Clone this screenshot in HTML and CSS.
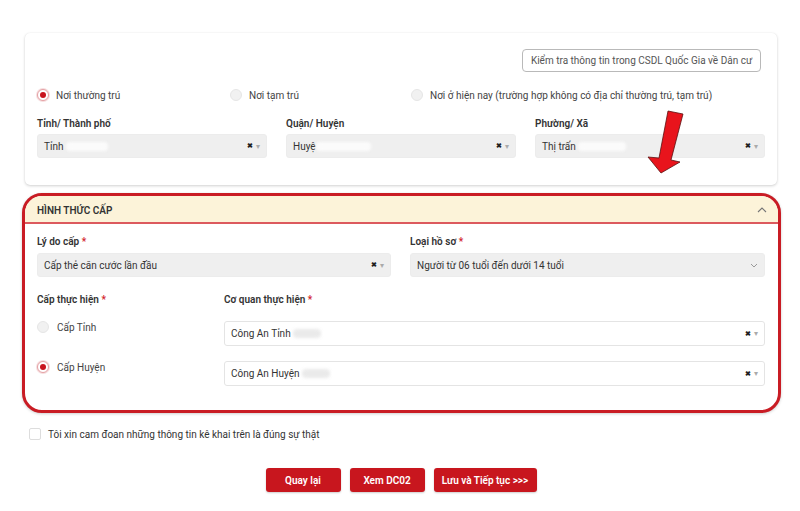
FILE: index.html
```html
<!DOCTYPE html>
<html lang="vi">
<head>
<meta charset="utf-8">
<title>Hình thức cấp</title>
<link rel="stylesheet" href="styles.css">
</head>
<body>
<div class="page">
  <section class="card card-address">
    <div class="check-row">
      <button class="btn-outline">Kiểm tra thông tin trong CSDL Quốc Gia về Dân cư</button>
    </div>
    <div class="radio-row">
      <label class="radio-item w-1"><span class="radio checked"></span>Nơi thường trú</label>
      <label class="radio-item w-2"><span class="radio"></span>Nơi tạm trú</label>
      <label class="radio-item"><span class="radio"></span>Nơi ở hiện nay (trường hợp không có địa chỉ thường trú, tạm trú)</label>
    </div>
    <div class="grid-3">
      <div class="field">
        <div class="label">Tỉnh/ Thành phố</div>
        <div class="select gray"><span class="val">Tỉnh <span class="blur b1"></span></span><span class="ctl"><span class="x">✖</span><span class="caret">▾</span></span></div>
      </div>
      <div class="field">
        <div class="label">Quận/ Huyện</div>
        <div class="select gray"><span class="val">Huyệ<span class="blur b2"></span></span><span class="ctl"><span class="x">✖</span><span class="caret">▾</span></span></div>
      </div>
      <div class="field">
        <div class="label">Phường/ Xã</div>
        <div class="select gray"><span class="val">Thị trấn <span class="blur b3"></span></span><span class="ctl"><span class="x">✖</span><span class="caret">▾</span></span></div>
      </div>
    </div>
    <svg class="arrow" width="40" height="66" viewBox="646 109 40 66">
      <polygon points="668,111 683,114 671,160 680,162 661,173 648,157 659,158" fill="#e8141c" stroke="#5a1010" stroke-width="0.8" stroke-linejoin="round"/>
    </svg>
  </section>

  <section class="card card-issue">
    <div class="issue-head">
      <span class="title">HÌNH THỨC CẤP</span>
      <svg width="10" height="6" viewBox="0 0 10 6"><polyline points="1,5 5,1 9,5" fill="none" stroke="#777" stroke-width="1.1"/></svg>
    </div>
    <div class="issue-body">
      <div class="grid-2">
        <div class="field">
          <div class="label">Lý do cấp <span class="req">*</span></div>
          <div class="select gray"><span class="val">Cấp thẻ căn cước lần đầu</span><span class="ctl"><span class="x">✖</span><span class="caret">▾</span></span></div>
        </div>
        <div class="field">
          <div class="label">Loại hồ sơ <span class="req">*</span></div>
          <div class="select gray"><span class="val">Người từ 06 tuổi đến dưới 14 tuổi</span><span class="ctl"><svg width="8" height="5" viewBox="0 0 8 5"><polyline points="1,1 4,4 7,1" fill="none" stroke="#999" stroke-width="1"/></svg></span></div>
        </div>
      </div>
      <div class="grid-level">
        <div class="level-col">
          <div class="label">Cấp thực hiện <span class="req">*</span></div>
          <label class="radio-item lvl lvl-1"><span class="radio"></span>Cấp Tỉnh</label>
          <label class="radio-item lvl lvl-2"><span class="radio checked"></span>Cấp Huyện</label>
        </div>
        <div class="agency-col">
          <div class="label">Cơ quan thực hiện <span class="req">*</span></div>
          <div class="select white s-1"><span class="val">Công An Tỉnh <span class="blur b4"></span></span><span class="ctl"><span class="x">✖</span><span class="caret">▾</span></span></div>
          <div class="select white s-2"><span class="val">Công An Huyện <span class="blur b5"></span></span><span class="ctl"><span class="x">✖</span><span class="caret">▾</span></span></div>
        </div>
      </div>
    </div>
  </section>

  <label class="agree"><span class="checkbox"></span>Tôi xin cam đoan những thông tin kê khai trên là đúng sự thật</label>

  <div class="actions">
    <button class="btn-red b-back">Quay lại</button>
    <button class="btn-red b-view">Xem DC02</button>
    <button class="btn-red b-save">Lưu và Tiếp tục &gt;&gt;&gt;</button>
  </div>
</div>
</body>
</html>
```

FILE: styles.css
```css
* { box-sizing: border-box; }
html, body { margin: 0; padding: 0; background: #fff; }
body {
  font-family: Roboto, "Liberation Sans", Arial, sans-serif;
  font-size: 10px;
  color: #333;
  width: 800px;
  height: 511px;
  overflow: hidden;
}
.page {
  padding: 33px 23px 0 25px;
}
.card {
  position: relative;
  background: #fff;
  border-radius: 5px;
  box-shadow: 0 1px 3px rgba(0,0,0,0.18), 0 0 1px rgba(0,0,0,0.08);
}
.card-address {
  height: 152px;
  padding: 16px 12px 0 12px;
}
.check-row {
  display: flex;
  justify-content: flex-end;
  padding-right: 4px;
}
.btn-outline {
  height: 23px;
  width: 239px;
  border: 1px solid #b9b9b9;
  border-radius: 4px;
  background: #fff;
  color: #555;
  font-family: inherit;
  font-size: 10px;
  padding: 0;
}
.radio-row {
  display: flex;
  align-items: center;
  margin-top: 17px;
  height: 12px;
}
.radio-item {
  display: flex;
  align-items: center;
  gap: 7px;
  color: #444;
  white-space: nowrap;
}
.radio-row .w-1 { width: 193px; }
.radio-row .w-2 { width: 186px; }
.radio-row .radio-item:last-child { margin-left: -5px; }
.radio {
  width: 12px;
  height: 12px;
  border-radius: 50%;
  background: #f1f1f1;
  border: 1px solid #e6e6e6;
  flex: none;
  position: relative;
}
.radio.checked {
  background: #fff;
  border: 1px solid #e4a0a4;
  box-shadow: 0 0 0 1px rgba(220,120,125,0.25);
}
.radio.checked::after {
  content: "";
  position: absolute;
  left: 2px;
  top: 2px;
  width: 6px;
  height: 6px;
  border-radius: 50%;
  background: #c8141e;
}
.grid-3 {
  display: grid;
  grid-template-columns: 230px 230px 230px;
  column-gap: 19px;
  margin-top: 17px;
}
.label {
  font-weight: 600;
  color: #333;
  line-height: 12px;
  height: 12px;
  margin-bottom: 4px;
}
.req { color: #d2232a; }
.select {
  height: 24px;
  border-radius: 3px;
  display: flex;
  align-items: center;
  justify-content: space-between;
  padding: 0 6px 0 6px;
  color: #333;
}
.select.gray { background: #efefef; border: 1px solid #ececec; }
.select.white { background: #fff; border: 1px solid #e4e4e4; height: 25px; }
.val { display: flex; align-items: center; white-space: pre; }
.ctl { display: flex; align-items: center; gap: 3px; }
.x { font-size: 7px; color: #222; font-weight: 700; }
.caret { font-size: 8px; color: #aaa; }
.blur {
  display: inline-block;
  height: 9px;
  background: #fbfbfb;
  border-radius: 4px;
  filter: blur(1.5px);
}
.b1 { width: 42px; }
.b2 { width: 55px; }
.b3 { width: 48px; }
.b4 { width: 28px; background: #ddd; opacity: 0.6; }
.b5 { width: 28px; background: #ddd; opacity: 0.6; }
.arrow {
  position: absolute;
  left: 621px;
  top: 76px;
}
.card-issue {
  margin: 8px -4px 0 -3px;
  border: 3px solid #c91c24;
  border-radius: 20px;
  overflow: hidden;
  height: 220px;
}
.issue-head {
  height: 28px;
  background: #fcf3d9;
  border-bottom: 2px solid #dc5a5e;
  display: flex;
  align-items: center;
  justify-content: space-between;
  padding: 2px 11px 0 12px;
}
.issue-head .title {
  font-weight: 600;
  color: #333;
}
.issue-body {
  padding: 12px 10px 0 12px;
}
.grid-2 {
  display: grid;
  grid-template-columns: 354px 355px;
  column-gap: 19px;
}
.grid-2 .label { margin-bottom: 5px; }
.grid-level {
  display: grid;
  grid-template-columns: 168px 541px;
  column-gap: 19px;
  margin-top: 17px;
}
.level-col .lvl { gap: 8px; }
.lvl-1 { margin-top: 15px; }
.lvl-2 { margin-top: 28px; }
.agency-col .s-1 { margin-top: 15px; }
.agency-col .s-2 { margin-top: 15px; }
.agree {
  display: flex;
  align-items: center;
  gap: 7px;
  margin: 15px 0 0 4px;
  color: #333;
}
.checkbox {
  width: 12px;
  height: 12px;
  border: 1px solid #ddd;
  border-radius: 2px;
  background: #fff;
}
.actions {
  display: flex;
  justify-content: center;
  gap: 9px;
  margin: 28px 0 0 0;
}
.btn-red {
  height: 24px;
  background: #c8161e;
  color: #fff;
  border: none;
  border-radius: 3px;
  font-family: inherit;
  font-size: 10px;
  font-weight: 600;
  padding: 0;
  box-shadow: 0 1px 2px rgba(0,0,0,0.2);
}
.b-back { width: 75px; }
.b-view { width: 75px; }
.b-save { width: 103px; }
```
